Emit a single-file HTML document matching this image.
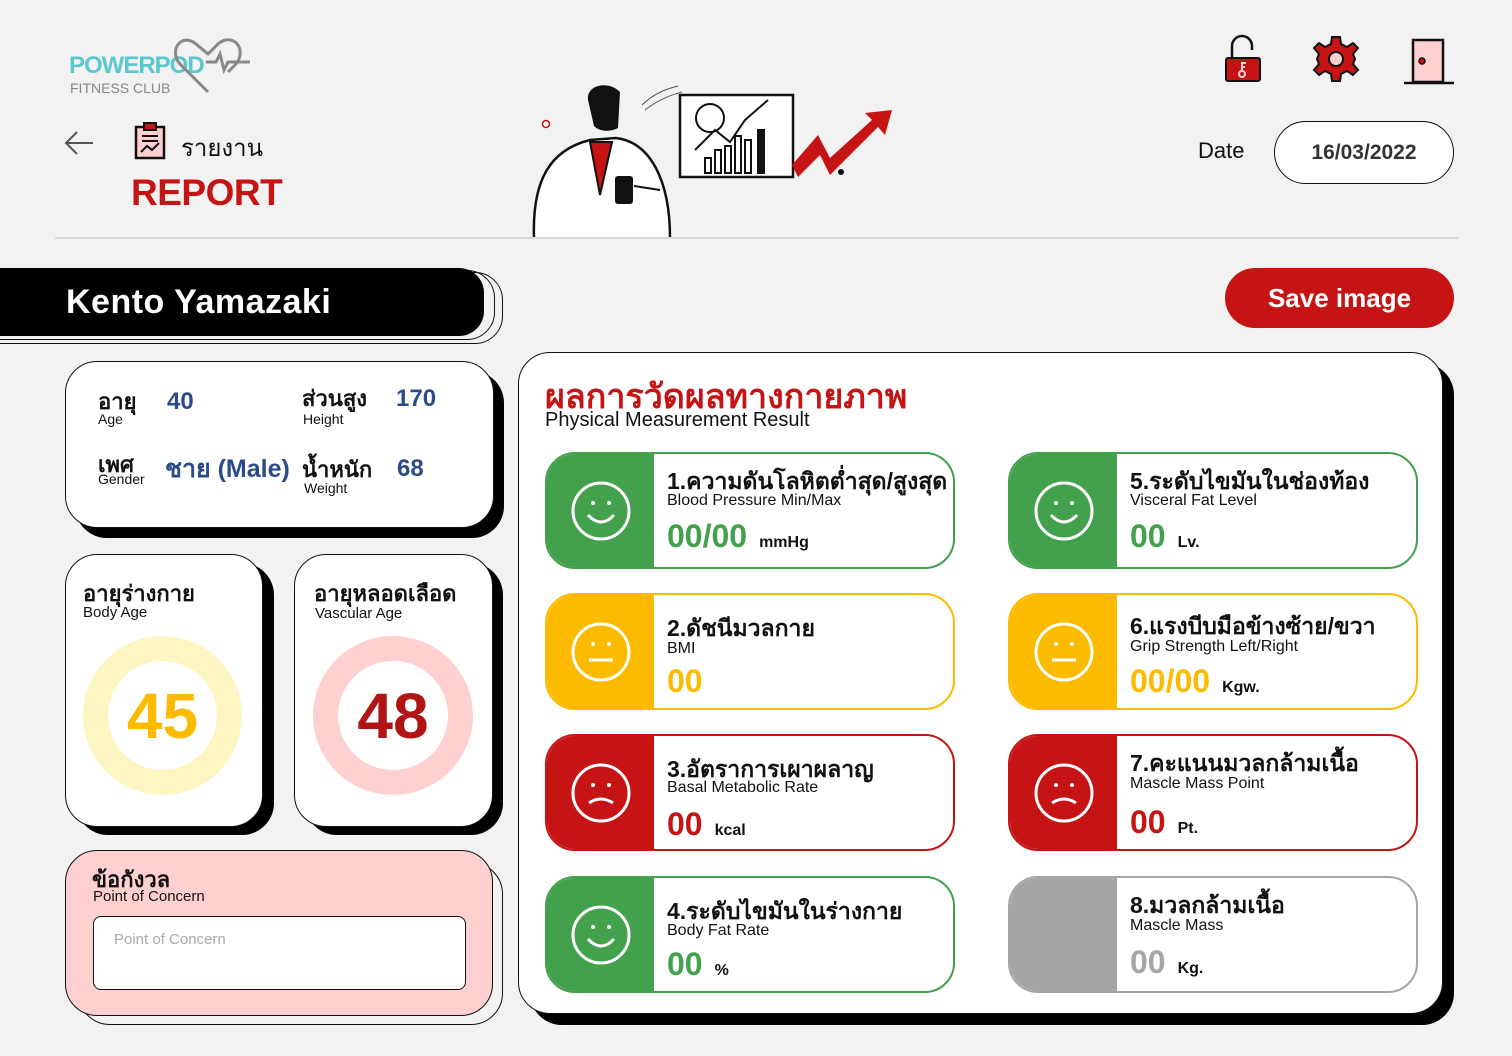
<!DOCTYPE html>
<html><head><meta charset="utf-8"><style>
*{box-sizing:border-box;margin:0;padding:0}
body{width:1512px;height:1056px;background:#f2f2f2;font-family:"Liberation Sans",sans-serif;position:relative;overflow:hidden;color:#111}
.a{position:absolute}
.card{position:absolute;width:410px;height:117px;border:2px solid;border-radius:30px;background:#fff;overflow:hidden}
.card .ic{position:absolute;left:0;top:0;width:107px;height:100%;display:flex;align-items:center;justify-content:center}
.card .t{position:absolute;left:120px;top:10px;font-size:23px;font-weight:bold;white-space:nowrap}
.card .s{position:absolute;left:120px;top:38px;font-size:16px;white-space:nowrap}
.card .v{position:absolute;left:120px;top:64px;font-size:32px;font-weight:bold;white-space:nowrap}
.card .v small{font-size:16px;color:#111;margin-left:12px}
</style></head><body>
<!-- logo -->
<div class="a" style="left:69px;top:52px;font-size:24px;font-weight:bold;color:#5bc8cf;letter-spacing:-1px">POWERPOD</div>
<div class="a" style="left:70px;top:80px;font-size:14px;color:#888">FITNESS CLUB</div>
<svg class="a" style="left:170px;top:36px" width="82" height="60" viewBox="0 0 82 60"><path d="M38 56 L10 28 C-2 14 12 -4 26 8 L38 18 L48 8 C62 -4 78 12 66 28 L58 36 M36 26 L46 26 L50 18 L54 34 L58 26 L80 26" fill="none" stroke="#888" stroke-width="3"/></svg>
<!-- back + title -->
<svg class="a" style="left:63px;top:130px" width="32" height="26"><path d="M30 13H3M14 2L3 13L14 24" fill="none" stroke="#555" stroke-width="2"/></svg>
<svg class="a" style="left:134px;top:122px" width="32" height="38"><rect x="2" y="5" width="28" height="31" fill="#ffd0d0" stroke="#111" stroke-width="2.5"/><rect x="10" y="1" width="12" height="7" fill="#c61414" stroke="#111" stroke-width="2"/><path d="M8 14H24M8 19H24M7 30L13 24L18 28L25 21" fill="none" stroke="#111" stroke-width="2"/></svg>
<div class="a" style="left:181px;top:128px;font-size:24px">รายงาน</div>
<div class="a" style="left:131px;top:172px;font-size:37px;font-weight:bold;color:#c61414;letter-spacing:-0.5px">REPORT</div>
<!-- illustration -->
<svg class="a" style="left:530px;top:80px" width="410" height="160" viewBox="0 0 410 160">
<path d="M4 158 C2 100 20 70 60 60 L86 58 C120 62 140 100 140 158" fill="#fff" stroke="#111" stroke-width="2.5"/>
<path d="M60 62 L70 115 L82 62 Z" fill="#c61414" stroke="#111" stroke-width="2"/>
<path d="M58 20 C56 5 78 0 90 12 L88 48 C80 52 70 52 64 46 Z" fill="#111"/>
<rect x="85" y="96" width="18" height="28" rx="3" fill="#111"/><path d="M104 106 L130 110" stroke="#111" stroke-width="2"/>
<rect x="150" y="15" width="113" height="82" fill="#fff" stroke="#111" stroke-width="2.5"/>
<circle cx="180" cy="38" r="14" fill="none" stroke="#111" stroke-width="2"/>
<g fill="none" stroke="#111" stroke-width="2"><rect x="175" y="78" width="6" height="15"/><rect x="185" y="70" width="6" height="23"/><rect x="195" y="66" width="6" height="27"/><rect x="205" y="56" width="6" height="37"/><rect x="215" y="60" width="6" height="33"/><rect x="228" y="50" width="6" height="43" fill="#111"/><path d="M165 70 L185 50 L200 62 L215 40 L238 20"/></g>
<path d="M262 85 L288 55 L300 78 L342 40 L335 33 L362 30 L355 55 L348 47 L300 95 L290 75 L268 97 Z" fill="#c61414"/>
<path d="M112 25 C125 12 140 8 148 6 M115 30 C130 18 145 14 152 12" stroke="#555" fill="none"/>
<circle cx="16" cy="44" r="3.5" fill="none" stroke="#c61414" stroke-width="1.5"/><circle cx="311" cy="92" r="3" fill="#111"/>
</svg>
<!-- top icons -->
<svg class="a" style="left:1222px;top:34px" width="42" height="50"><path d="M10 24V12A10 10 0 0 1 30 12V16" fill="none" stroke="#111" stroke-width="2.5"/><rect x="4" y="24" width="34" height="23" rx="2" fill="#c61414" stroke="#111" stroke-width="2"/><circle cx="20" cy="40" r="3" fill="none" stroke="#ffd0d0" stroke-width="2"/><path d="M20 37V29H24M20 33H23" stroke="#ffd0d0" stroke-width="2" fill="none"/></svg>
<svg class="a" style="left:1312px;top:35px" width="48" height="48" viewBox="-24 -24 48 48"><g fill="#c61414" stroke="#111" stroke-width="2"><path d="M-4 -22H4L5 -15L11 -12L17 -16L22 -11L17 -5L19 0L17 5L22 11L17 16L11 12L5 15L4 22H-4L-5 15L-11 12L-17 16L-22 11L-17 5L-19 0L-17 -5L-22 -11L-17 -16L-11 -12L-5 -15Z"/></g><circle r="7" fill="#ffd0d0" stroke="#111" stroke-width="2"/></svg>
<svg class="a" style="left:1403px;top:38px" width="52" height="48"><rect x="10" y="2" width="30" height="42" fill="#ffd0d0" stroke="#111" stroke-width="2.5"/><circle cx="19" cy="23" r="3" fill="#c61414" stroke="#111" stroke-width="1.5"/><path d="M1 45H51" stroke="#111" stroke-width="2.5"/></svg>
<div class="a" style="left:1198px;top:138px;font-size:22px">Date</div>
<div class="a" style="left:1274px;top:121px;width:180px;height:63px;border:1.5px solid #111;border-radius:32px;background:#fff;display:flex;align-items:center;justify-content:center;font-size:21px;font-weight:bold;color:#333">16/03/2022</div>
<div class="a" style="left:55px;top:237px;width:1404px;height:1.5px;background:#d8d8d8"></div>
<!-- name bar -->
<div class="a" style="left:-30px;top:272px;width:533px;height:72px;border:1.5px solid #111;border-radius:0 28px 28px 0"></div>
<div class="a" style="left:-30px;top:270px;width:525px;height:70px;border:1.5px solid #111;border-radius:0 28px 28px 0"></div>
<div class="a" style="left:0;top:268px;width:484px;height:68px;background:#000;border-radius:0 25px 25px 0"></div>
<div class="a" style="left:66px;top:283px;font-size:34px;font-weight:bold;color:#fff;letter-spacing:0.5px">Kento Yamazaki</div>
<!-- save -->
<div class="a" style="left:1225px;top:268px;width:229px;height:60px;background:#c61414;border-radius:30px;color:#fff;font-size:26px;font-weight:bold;display:flex;align-items:center;justify-content:center">Save image</div>
<!-- info card -->
<div class="a" style="left:75px;top:371px;width:429px;height:167px;background:#000;border-radius:32px"></div>
<div class="a" style="left:65px;top:361px;width:429px;height:167px;background:#fff;border:1.5px solid #111;border-radius:32px"></div>
<div class="a" style="left:98px;top:384px;font-size:22px;font-weight:bold">อายุ</div><div class="a" style="left:98px;top:411px;font-size:14px">Age</div>
<div class="a" style="left:167px;top:388px;font-size:24px;font-weight:bold;color:#2b4a8a">40</div>
<div class="a" style="left:302px;top:381px;font-size:22px;font-weight:bold">ส่วนสูง</div><div class="a" style="left:303px;top:411px;font-size:14px">Height</div>
<div class="a" style="left:396px;top:385px;font-size:24px;font-weight:bold;color:#2b4a8a">170</div>
<div class="a" style="left:98px;top:447px;font-size:22px;font-weight:bold">เพศ</div><div class="a" style="left:98px;top:471px;font-size:14px">Gender</div>
<div class="a" style="left:165px;top:449px;font-size:25px;font-weight:bold;color:#2b4a8a">ชาย (Male)</div>
<div class="a" style="left:302px;top:452px;font-size:22px;font-weight:bold">น้ำหนัก</div><div class="a" style="left:304px;top:480px;font-size:14px">Weight</div>
<div class="a" style="left:397px;top:455px;font-size:24px;font-weight:bold;color:#2b4a8a">68</div>
<!-- age cards -->
<div class="a" style="left:76px;top:563px;width:198px;height:272px;background:#000;border-radius:32px"></div>
<div class="a" style="left:65px;top:554px;width:198px;height:273px;background:#fff;border:1.5px solid #111;border-radius:32px"></div>
<div class="a" style="left:83px;top:576px;font-size:22px;font-weight:bold">อายุร่างกาย</div>
<div class="a" style="left:83px;top:604px;font-size:15px">Body Age</div>
<div class="a" style="left:83px;top:636px;width:159px;height:159px;border-radius:50%;border:25px solid #fdf5c2;background:#fff;display:flex;align-items:center;justify-content:center;font-size:64px;font-weight:bold;color:#fdbb00">45</div>
<div class="a" style="left:305px;top:563px;width:198px;height:272px;background:#000;border-radius:32px"></div>
<div class="a" style="left:294px;top:554px;width:199px;height:273px;background:#fff;border:1.5px solid #111;border-radius:32px"></div>
<div class="a" style="left:314px;top:576px;font-size:22px;font-weight:bold">อายุหลอดเลือด</div>
<div class="a" style="left:315px;top:605px;font-size:15px">Vascular Age</div>
<div class="a" style="left:313px;top:636px;width:160px;height:159px;border-radius:50%;border:25px solid #ffd0d0;background:#fff;display:flex;align-items:center;justify-content:center;font-size:64px;font-weight:bold;color:#b01414">48</div>
<!-- concern -->
<div class="a" style="left:78px;top:862px;width:425px;height:163px;border:1.5px solid #111;border-radius:32px"></div>
<div class="a" style="left:65px;top:850px;width:428px;height:166px;background:#ffd0d0;border:1.5px solid #111;border-radius:32px"></div>
<div class="a" style="left:92px;top:862px;font-size:22px;font-weight:bold">ข้อกังวล</div>
<div class="a" style="left:93px;top:888px;font-size:15px">Point of Concern</div>
<div class="a" style="left:93px;top:916px;width:373px;height:74px;background:#fff;border:1.5px solid #111;border-radius:8px;padding:14px 20px;font-size:15px;color:#aaa">Point of Concern</div>
<!-- main panel -->
<div class="a" style="left:530px;top:363px;width:924px;height:662px;background:#000;border-radius:32px"></div>
<div class="a" style="left:518px;top:352px;width:925px;height:662px;background:#fff;border:1.5px solid #111;border-radius:32px"></div>
<div class="a" style="left:545px;top:369px;font-size:34px;font-weight:bold;color:#c61414">ผลการวัดผลทางกายภาพ</div>
<div class="a" style="left:545px;top:409px;font-size:20px">Physical Measurement Result</div>

<svg width="0" height="0" style="position:absolute"><defs>
<g id="happy" fill="none" stroke="#fff" stroke-width="3"><circle cx="30" cy="30" r="28"/><path d="M17 34 Q30 48 43 34"/><circle cx="22" cy="22" r="2" fill="#fff" stroke="none"/><circle cx="38" cy="22" r="2" fill="#fff" stroke="none"/></g>
<g id="meh" fill="none" stroke="#fff" stroke-width="3"><circle cx="30" cy="30" r="28"/><path d="M18 38H42"/><circle cx="22" cy="22" r="2" fill="#fff" stroke="none"/><circle cx="38" cy="22" r="2" fill="#fff" stroke="none"/></g>
<g id="sad" fill="none" stroke="#fff" stroke-width="3"><circle cx="30" cy="30" r="28"/><path d="M18 40 Q30 32 42 40"/><circle cx="22" cy="22" r="2" fill="#fff" stroke="none"/><circle cx="38" cy="22" r="2" fill="#fff" stroke="none"/></g>
</defs></svg>

<div class="card" style="left:545px;top:452px;border-color:#43a04c"><div class="ic" style="background:#43a04c"><svg width="60" height="60"><use href="#happy"/></svg></div><div class="t">1.ความดันโลหิตต่ำสุด/สูงสุด</div><div class="s">Blood Pressure Min/Max</div><div class="v" style="color:#43a04c">00/00<small>mmHg</small></div></div>
<div class="card" style="left:545px;top:593px;border-color:#fdbb00"><div class="ic" style="background:#fdbb00"><svg width="60" height="60"><use href="#meh"/></svg></div><div class="t" style="top:16px">2.ดัชนีมวลกาย</div><div class="s" style="top:45px">BMI</div><div class="v" style="color:#fdbb00;top:68px">00</div></div>
<div class="card" style="left:545px;top:734px;border-color:#c61414"><div class="ic" style="background:#c61414"><svg width="60" height="60"><use href="#sad"/></svg></div><div class="t" style="top:16px">3.อัตราการเผาผลาญ</div><div class="s" style="top:43px">Basal Metabolic Rate</div><div class="v" style="color:#c61414;top:70px">00<small>kcal</small></div></div>
<div class="card" style="left:545px;top:876px;border-color:#43a04c"><div class="ic" style="background:#43a04c"><svg width="60" height="60"><use href="#happy"/></svg></div><div class="t" style="top:16px">4.ระดับไขมันในร่างกาย</div><div class="s" style="top:44px">Body Fat Rate</div><div class="v" style="color:#43a04c;top:68px">00<small>%</small></div></div>

<div class="card" style="left:1008px;top:452px;border-color:#43a04c"><div class="ic" style="background:#43a04c"><svg width="60" height="60"><use href="#happy"/></svg></div><div class="t">5.ระดับไขมันในช่องท้อง</div><div class="s" style="top:38px">Visceral Fat Level</div><div class="v" style="color:#43a04c">00<small>Lv.</small></div></div>
<div class="card" style="left:1008px;top:593px;border-color:#fdbb00"><div class="ic" style="background:#fdbb00"><svg width="60" height="60"><use href="#meh"/></svg></div><div class="t" style="top:14px">6.แรงบีบมือข้างซ้าย/ขวา</div><div class="s" style="top:43px">Grip Strength Left/Right</div><div class="v" style="color:#fdbb00;top:68px">00/00<small>Kgw.</small></div></div>
<div class="card" style="left:1008px;top:734px;border-color:#c61414"><div class="ic" style="background:#c61414"><svg width="60" height="60"><use href="#sad"/></svg></div><div class="t">7.คะแนนมวลกล้ามเนื้อ</div><div class="s" style="top:39px">Mascle Mass Point</div><div class="v" style="color:#c61414;top:68px">00<small>Pt.</small></div></div>
<div class="card" style="left:1008px;top:876px;border-color:#a5a5a5"><div class="ic" style="background:#a5a5a5"></div><div class="t">8.มวลกล้ามเนื้อ</div><div class="s" style="top:39px">Mascle Mass</div><div class="v" style="color:#a5a5a5;top:66px">00<small>Kg.</small></div></div>
</body></html>
